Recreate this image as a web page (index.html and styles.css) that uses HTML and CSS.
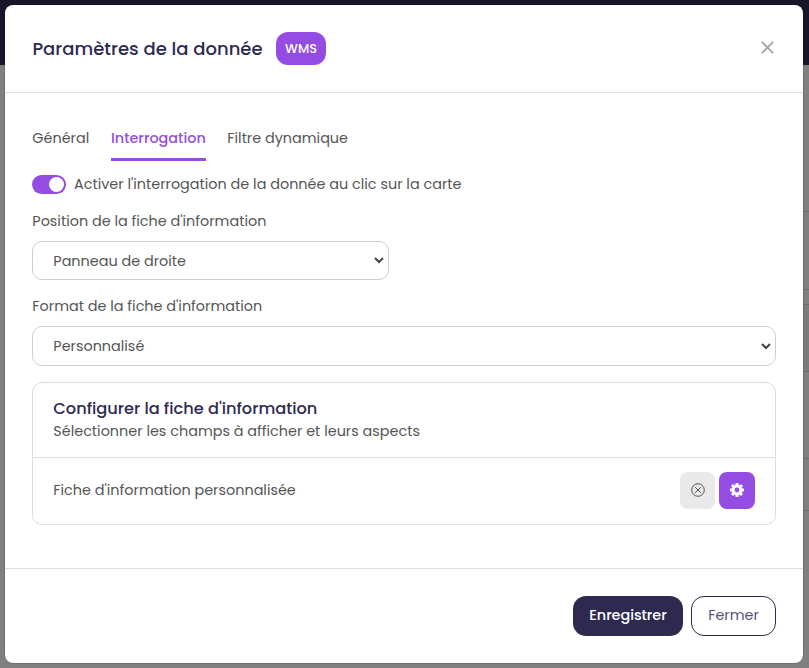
FILE: index.html
```html
<!DOCTYPE html>
<html lang="fr">
<head>
<meta charset="utf-8">
<title>Paramètres de la donnée</title>
<link rel="stylesheet" href="styles.css">
</head>
<body>
<div class="backdrop">
  <div class="modal" role="dialog" aria-labelledby="title">
    <header class="modal-header">
      <h1 class="modal-title" id="title">Paramètres de la donnée</h1>
      <span class="badge">WMS</span>
      <button class="close" aria-label="Fermer la fenêtre">
        <svg width="13" height="13" viewBox="0 0 13 13"><path d="M.9.9 12.1 12.1M12.1.9.9 12.1" stroke="#a2a2a2" stroke-width="1.8" fill="none"/></svg>
      </button>
    </header>
    <main class="modal-body">
      <nav class="tabs">
        <a class="tab tab-general">Général</a>
        <a class="tab tab-active">Interrogation</a>
        <a class="tab tab-filter">Filtre dynamique</a>
      </nav>
      <div class="toggle-row">
        <span class="switch"></span>
        <span class="toggle-label">Activer l'interrogation de la donnée au clic sur la carte</span>
      </div>
      <div class="label">Position de la fiche d'information</div>
      <div class="select select-half">
        <span>Panneau de droite</span>
        <svg class="chevron" width="10" height="7" viewBox="0 0 10 7"><path d="M1 1 5 5 9 1" stroke="#444" stroke-width="2" fill="none"/></svg>
      </div>
      <div class="label label-format">Format de la fiche d'information</div>
      <div class="select select-full">
        <span>Personnalisé</span>
        <svg class="chevron" width="10" height="7" viewBox="0 0 10 7"><path d="M1 1 5 5 9 1" stroke="#444" stroke-width="2" fill="none"/></svg>
      </div>
      <section class="card">
        <div class="card-header">
          <h2 class="card-title">Configurer la fiche d'information</h2>
          <p class="card-text">Sélectionner les champs à afficher et leurs aspects</p>
        </div>
        <div class="card-row">
          <span class="card-name">Fiche d'information personnalisée</span>
          <button class="icon-button reset" aria-label="Réinitialiser">
            <svg width="14" height="14" viewBox="0 0 14 14" fill="none" stroke="#555"><circle cx="7" cy="7" r="6.3"/><path d="m4.1 4.1 5.8 5.8m0-5.8-5.8 5.8"/></svg>
          </button>
          <button class="icon-button settings" aria-label="Configurer">
            <svg width="14" height="14" viewBox="-7 -7 14 14"><circle r="3.9" fill="none" stroke="#fff" stroke-width="3"/><path d="M0-7V-4.5M0 7V4.5M-7 0H-4.5M7 0H4.5M-5-5-3.4-3.4M5 5 3.4 3.4M-5 5-3.4 3.4M5-5 3.4-3.4" stroke="#fff" stroke-width="2.9"/></svg>
          </button>
        </div>
      </section>
    </main>
    <footer class="modal-footer">
      <button class="button primary">Enregistrer</button>
      <button class="button secondary">Fermer</button>
    </footer>
  </div>
</div>
</body>
</html>
```

FILE: styles.css
```css
* { box-sizing: border-box; }
body {
  margin: 0;
  font: 400 14.4px/22px Poppins, Inter, sans-serif;
  color: #555;
}
button { font: inherit; border: 0; padding: 0; background: none; }
h1, h2, p { margin: 0; }
svg { display: block; }

.backdrop {
  height: 668px;
  padding: 5px 6px 5px 5px;
  background:
    linear-gradient(#171528, #171528) 0 0 / 100% 65px no-repeat,
    linear-gradient(#6c6c6c, #6c6c6c) 100% 211px / 6px 1px no-repeat,
    linear-gradient(#6c6c6c, #6c6c6c) 100% 289px / 6px 1px no-repeat,
    linear-gradient(#6c6c6c, #6c6c6c) 100% 304px / 6px 1px no-repeat,
    linear-gradient(#6c6c6c, #6c6c6c) 100% 371px / 6px 1px no-repeat,
    linear-gradient(#6c6c6c, #6c6c6c) 100% 458px / 6px 1px no-repeat,
    linear-gradient(#6c6c6c, #6c6c6c) 100% 510px / 6px 1px no-repeat,
    linear-gradient(#7b7b7b, #7b7b7b) 100% 304px / 6px 67px no-repeat,
    #808080;
}
.modal {
  display: flex;
  flex-direction: column;
  height: 658px;
  background: #fff;
  border-radius: 8px;
  box-shadow: 0 0 0 1px rgba(0, 0, 0, .12);
}
.modal-header {
  display: flex;
  align-items: center;
  height: 88px;
  padding: 0 29px 0 27px;
  border-bottom: 1px solid #dedede;
}
.modal-title {
  width: 231px;
  padding-left: .4px;
  font-size: 18px;
  font-weight: 500;
  letter-spacing: .02px;
  color: #2e2a4f;
  white-space: nowrap;
}
.badge {
  width: 50px;
  height: 33px;
  margin-left: 13px;
  border-radius: 12px;
  background: #944ce2;
  color: #fff;
  font-size: 12.8px;
  font-weight: 500;
  line-height: 33px;
  text-align: center;
}
.close { margin: 0 0 2px auto; }

.modal-body {
  flex: 1;
  padding: 34px 27px 0;
  white-space: nowrap;
}
.tabs { display: flex; height: 34px; }
.tab { height: 34px; }
.tab-general { width: 57px; margin-right: 22px; padding-left: .3px; }
.tab-active {
  width: 95px;
  margin-right: 21px;
  border-bottom: 3px solid #944ce2;
  color: #944ce2;
  font-weight: 500;
}
.tab-filter { padding-left: .3px; }
.toggle-row {
  display: flex;
  align-items: center;
  height: 19px;
  margin-top: 14px;
}
.toggle-label { margin-bottom: 1px; }
.switch {
  width: 34px;
  height: 19px;
  margin-right: 8px;
  padding: 2px;
  border-radius: 10px;
  background: #944ce2;
}
.switch::after {
  content: "";
  display: block;
  width: 15px;
  height: 15px;
  margin-left: auto;
  border-radius: 50%;
  background: #fff;
}
.label { margin: 16px 0 9px; padding-left: .3px; }
.label-format { margin-top: 15px; }
.select {
  display: flex;
  align-items: center;
  justify-content: space-between;
  padding: 0 4px 0 20.3px;
  border: 1px solid #cfcfcf;
  border-radius: 10px;
}
.select-half { width: 357px; height: 39px; }
.select-full { height: 40px; }
.chevron { margin-bottom: 1px; }
.select-full .chevron { margin-bottom: 0; }

.card {
  height: 143px;
  margin-top: 16px;
  border: 1px solid #dedede;
  border-radius: 10px;
}
.card-header {
  height: 74px;
  padding: 14px 20.3px 0;
}
.card-title {
  font-size: 16.2px;
  font-weight: 500;
  line-height: 23px;
  color: #2e2a4f;
}
.card-row {
  display: flex;
  align-items: center;
  height: 66px;
  padding: 0 20px 0 20.3px;
  border-top: 1px solid #dedede;
}
.card-name { margin: 0 auto 1px 0; }
.icon-button {
  display: flex;
  align-items: center;
  justify-content: center;
  height: 37px;
  padding-bottom: 2px;
  border-radius: 8px;
}
.reset { width: 35px; margin-right: 4px; background: #e9e9e9; }
.settings { width: 36px; background: #944ce2; }

.modal-footer {
  display: flex;
  justify-content: flex-end;
  height: 95px;
  padding: 27px 27px 0;
  border-top: 1px solid #dedede;
}
.button { height: 40px; padding-bottom: 3px; border-radius: 13px; }
.primary {
  width: 110px;
  margin-right: 8px;
  background: #2e2a4f;
  color: #fff;
  font-weight: 500;
  letter-spacing: -.05px;
}
.secondary {
  width: 85px;
  border: 1px solid #2e2a4f;
  color: #56527a;
}
```
